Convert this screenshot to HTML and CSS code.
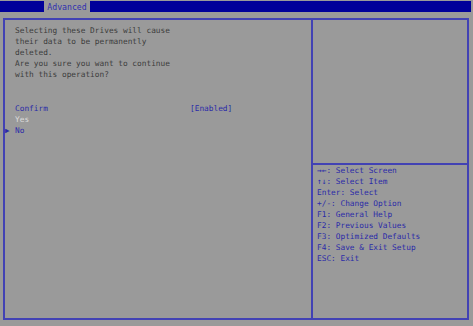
FILE: index.html
```html
<!DOCTYPE html>
<html lang="en">

<head>
    <meta charset="UTF-8">
    <title>Advanced</title>
    <link rel="stylesheet" href="styles.css">
</head>

<body>
    <div class="topbar">
        <div class="tab">Advanced</div>
    </div>

    <div class="frame">
        <div class="main">
            <div class="desc">
                <p>Selecting these Drives will cause</p>
                <p>their data to be permanently</p>
                <p>deleted.</p>
                <p>Are you sure you want to continue</p>
                <p>with this operation?</p>
            </div>

            <div class="row">
                <span class="label">Confirm</span>
                <span class="value">[Enabled]</span>
            </div>
            <div class="row opt">Yes</div>
            <div class="row sel"><span class="ptr">&#9654;</span>No</div>
        </div>

        <div class="side">
            <div class="help-top"></div>
            <div class="keys">
                <p>&rarr;&larr;: Select Screen</p>
                <p>&uarr;&darr;: Select Item</p>
                <p>Enter: Select</p>
                <p>+/-: Change Option</p>
                <p>F1: General Help</p>
                <p>F2: Previous Values</p>
                <p>F3: Optimized Defaults</p>
                <p>F4: Save &amp; Exit Setup</p>
                <p>ESC: Exit</p>
            </div>
        </div>
    </div>
</body>

</html>
```

FILE: styles.css
```css
* {
    padding: 0;
    margin: 0;
    box-sizing: border-box;
}

body {
    width: 473px;
    height: 326px;
    background-color: #9a9a9a;
    font-family: "DejaVu Sans Mono", monospace;
    font-size: 7.8px;
    line-height: 11px;
    overflow: hidden;
}

.topbar {
    margin: 1px 2px 0 0;
    height: 11px;
    background-color: #00009a;
    display: flex;
}

.tab {
    margin-left: 44px;
    width: 46px;
    height: 11px;
    background-color: #9a9a9a;
    color: #3030b0;
    text-align: center;
    line-height: 12px;
    font-size: 8.2px;
}

.frame {
    margin: 6px 4px 0 3px;
    height: 302px;
    border: 2px solid #4242b4;
    display: flex;
}

.main {
    width: 308px;
    border-right: 2px solid #4242b4;
    padding: 5px 0 0 10px;
    position: relative;
}

.desc {
    color: #3c3c3c;
    margin-bottom: 23px;
}

.row {
    color: #2a2aa8;
    display: flex;
}

.row .label {
    width: 175px;
}

.opt {
    color: #dcdcdc;
}

.ptr {
    position: absolute;
    left: 0;
    font-size: 7.5px;
}

.side {
    flex: 1;
    display: flex;
    flex-direction: column;
}

.help-top {
    height: 145px;
    border-bottom: 2px solid #4242b4;
}

.keys {
    color: #2a2aa8;
    padding: 0 0 0 4px;
}
```
